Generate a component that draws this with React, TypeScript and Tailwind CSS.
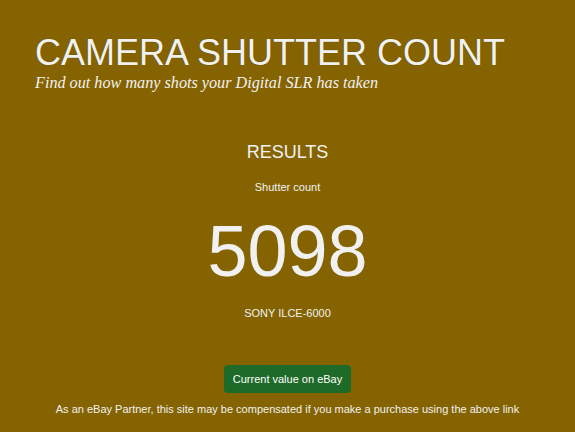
export default function App() {
  return (
    <div className="min-h-[432px] w-full bg-[#856300] text-[#f1f1f1] font-['Liberation_Sans',Arial,sans-serif]">
      <header className="px-[35px] pt-[33px]">
        <h1 className="text-[36px] leading-[40px] [text-shadow:0_0_1px_rgba(0,0,0,0.35)]">CAMERA SHUTTER COUNT</h1>
        <p className="font-['Liberation_Serif',Georgia,serif] italic text-[16.2px] leading-[18px] mt-[1px]">
          Find out how many shots your Digital SLR has taken
        </p>
      </header>

      <main className="flex flex-col items-center text-center">
        <h2 className="mt-[48px] text-[18px] leading-[24px]">RESULTS</h2>
        <p className="mt-[15px] text-[11px] leading-[16px]">Shutter count</p>
        <p className="mt-[16px] text-[72px] leading-[80px]">5098</p>
        <p className="mt-[14px] text-[11px] leading-[16px]">SONY ILCE-6000</p>
        <a
          href="#"
          className="mt-[44px] rounded-[4px] bg-[#1e6a29] px-[9px] h-[28px] flex items-center text-[11px] text-white"
        >
          Current value on eBay
        </a>
        <p className="mt-[8px] text-[11px] leading-[16px]">
          As an eBay Partner, this site may be compensated if you make a purchase using the above link
        </p>
      </main>
    </div>
  );
}
